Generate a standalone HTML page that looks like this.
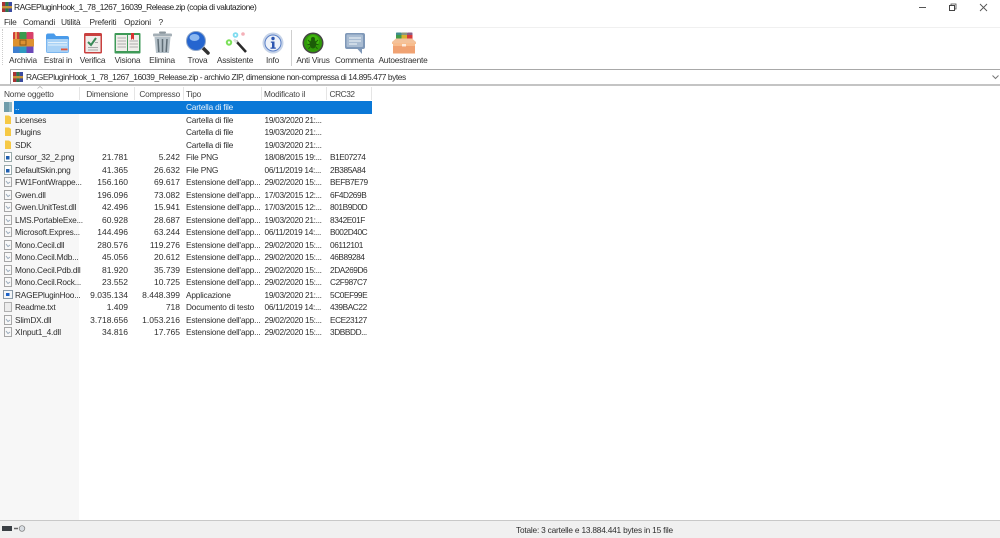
<!DOCTYPE html>
<html><head><meta charset="utf-8"><style>
html,body{margin:0;padding:0;background:#fff}
body{width:1000px;height:538px;overflow:hidden;position:relative;font-family:"Liberation Sans",sans-serif;font-size:8.3px;letter-spacing:-.2px;color:#2e2e2e;filter:blur(.25px)}
.a{position:absolute;white-space:nowrap}
.t{position:absolute;white-space:nowrap;line-height:12px;height:12px}
.m{top:15.5px;font-size:8.4px;letter-spacing:-.22px}
.lb{position:absolute;top:55px;line-height:11px;text-align:center;width:60px;font-size:8.3px;letter-spacing:-.2px;color:#333}
svg{position:absolute;overflow:visible}
.h{color:#444;top:88px}
.s{position:absolute;width:1px;top:87px;height:13px;background:#e5e5e5}
.w{position:absolute;left:0;width:372px;height:12px;line-height:12px}
.w i{position:absolute;font-style:normal;white-space:nowrap;top:0}
.n{left:15px}
.z{right:244px;font-size:8.5px;letter-spacing:0}
.c{right:192px;font-size:8.5px;letter-spacing:0}
.p{left:186px;letter-spacing:-.19px}
.d{left:264.5px;letter-spacing:-.3px}
.k{left:330px;letter-spacing:-.42px}
.w svg{left:4px;top:1px}
</style></head><body>
<svg width="0" height="0" style="position:absolute"><defs>
<symbol id="fo" viewBox="0 0 8 10"><path d="M1 .5H5L7 2V9H1Z" fill="#f6c945"/></symbol>
<symbol id="pn" viewBox="0 0 8 10"><rect x=".5" y=".5" width="7" height="9" fill="#fff" stroke="#9aa"/><rect x="2" y="4" width="3.500" height="3.500" fill="#1f5fb0"/></symbol>
<symbol id="dl" viewBox="0 0 8 10"><rect x=".5" y=".5" width="7" height="9" fill="#f8f8f8" stroke="#a6a6a6"/><path d="M2 4L4 6.500L6 5" fill="none" stroke="#9ab" stroke-width="1"/></symbol>
<symbol id="rr" viewBox="0 0 10 10"><rect width="10" height="10" fill="#7a4a8a"/><rect width="3" height="10" fill="#a33"/><rect x="3.500" width="3" height="10" fill="#2a7a4a"/><rect x="7" width="3" height="10" fill="#3a4aa0"/><rect y="4" width="10" height="2.400" fill="#c8943a"/></symbol>
</defs></svg>

<!-- title -->
<svg style="left:2px;top:2px" width="10" height="10"><use href="#rr"/></svg>
<div class="t" style="left:14px;top:1px;font-size:8.4px;letter-spacing:-.44px;color:#222">RAGEPluginHook_1_78_1267_16039_Release.zip (copia di valutazione)</div>
<svg style="left:919px;top:3px" width="70" height="10" viewBox="0 0 70 10"><path d="M0 4.500H7" stroke="#555" stroke-width="1"/><rect x="30.500" y="2.500" width="5" height="5" fill="none" stroke="#444" stroke-width="1"/><path d="M32 2.500V1H37V6H35.500" fill="none" stroke="#444" stroke-width=".8"/><path d="M61 1L68 8M68 1L61 8" stroke="#555" stroke-width=".9"/></svg>

<!-- menu -->
<div class="t m" style="left:4px">File</div>
<div class="t m" style="left:23px">Comandi</div>
<div class="t m" style="left:61px">Utilità</div>
<div class="t m" style="left:89.500px">Preferiti</div>
<div class="t m" style="left:124px">Opzioni</div>
<div class="t m" style="left:158.500px">?</div>
<div class="a" style="left:0;top:27px;width:1000px;height:1px;background:#f0f0f0"></div>
<div class="a" style="left:2px;top:29px;height:36px;border-left:1px dotted #ccc"></div>

<!-- toolbar icons -->
<svg style="left:12px;top:31px" width="23" height="23" viewBox="0 0 23 23"><rect x="1" y="1" width="6.500" height="21" rx="1" fill="#cf3f3a"/><rect x="7.500" y="1" width="7" height="21" fill="#3a9a4e"/><rect x="14.500" y="1" width="7" height="21" rx="1" fill="#d8406a"/><rect x="1" y="15" width="6.500" height="7" fill="#3f7fd0"/><rect x="14.500" y="15" width="7" height="7" fill="#6a48b8"/><rect x="7.500" y="15" width="7" height="7" fill="#2e9ac0"/><rect x="1" y="8" width="21" height="7.500" fill="#dd9130"/><rect x="8" y="9" width="6" height="5" fill="none" stroke="#8a5a18" stroke-width="1"/><rect x="3" y="1" width="2" height="7" fill="#e8a060"/></svg>
<svg style="left:45px;top:32px" width="25" height="22" viewBox="0 0 25 22"><path d="M1 4Q1 1.500 3 1.500H9L11 4H22Q24 4 24 6V19Q24 21 22 21H3Q1 21 1 19Z" fill="#4a9bea"/><rect x="1.500" y="7" width="22" height="13.500" rx="1" fill="#a9d2f6"/><path d="M3 10.500H22M3 13H22" stroke="#e3f1fc" stroke-width="1"/><rect x="16" y="16.500" width="6.500" height="1.800" fill="#e2553a"/></svg>
<svg style="left:83px;top:32px" width="20" height="22" viewBox="0 0 20 22"><rect x="1" y="1" width="18" height="20.500" rx="1.500" fill="#c9403f"/><rect x="2.500" y="4" width="15" height="16" fill="#efecea"/><path d="M5 10L8 13L13 6" fill="none" stroke="#3a8a58" stroke-width="2"/><path d="M5 15.500H15M5 18H15M12 10.500H15" stroke="#aaa" stroke-width="1"/></svg>
<svg style="left:114px;top:32px" width="27" height="22" viewBox="0 0 27 22"><rect x=".5" y="1" width="26" height="20.500" rx="1" fill="#3f9a58"/><path d="M2 3H13V19H2ZM14 3H25V19H14Z" fill="#f0eeea"/><path d="M3.500 6H12M3.500 9H12M3.500 12H12M3.500 15H12M15.500 9H24M15.500 12H24M15.500 15H24" stroke="#aeaeae" stroke-width="1"/><path d="M17 1H20V8L18.500 6.500L17 8Z" fill="#d83030"/></svg>
<svg style="left:151px;top:31px" width="23" height="23" viewBox="0 0 23 23"><rect x="8" y=".5" width="7" height="2" rx="1" fill="#8c979e"/><rect x="2" y="2.500" width="19" height="3" rx="1" fill="#a4afb6"/><path d="M3.500 6H19.500L18 22H5Z" fill="#b5c1c9"/><path d="M7 8L7.800 21M11.500 8V21M16 8L15.200 21" stroke="#5f6d76" stroke-width="1.500"/></svg>
<svg style="left:186px;top:31px" width="24" height="24" viewBox="0 0 24 24"><path d="M15 15L22 22" stroke="#333" stroke-width="3.500" stroke-linecap="round"/><circle cx="10" cy="10" r="9.500" fill="#2565cf"/><circle cx="10" cy="10" r="9.500" fill="none" stroke="#8fa7c9" stroke-width="1"/><ellipse cx="8.500" cy="6.500" rx="5" ry="3.500" fill="#8cb8f0"/></svg>
<svg style="left:223px;top:31px" width="25" height="23" viewBox="0 0 25 23"><path d="M13 10L23 21" stroke="#2a2a2a" stroke-width="2.500"/><path d="M11 8.500L14 11.500" stroke="#ddd" stroke-width="2.500"/><circle cx="12.500" cy="4" r="2.800" fill="#7fdcf0"/><circle cx="20" cy="3" r="1.800" fill="#f4b0b8"/><circle cx="6" cy="11.500" r="3.200" fill="#7ce05a"/><circle cx="6" cy="11.500" r="1.200" fill="#fff"/><circle cx="12.500" cy="4" r="1" fill="#fff"/></svg>
<svg style="left:262px;top:32px" width="22" height="22" viewBox="0 0 22 22"><circle cx="11" cy="11" r="10.500" fill="#c6d3e8"/><circle cx="11" cy="11" r="8" fill="#eef2f9" stroke="#5a80c8" stroke-width="1"/><circle cx="11" cy="6.500" r="1.700" fill="#2c55b0"/><path d="M8.800 9.500H12.500V15.500H13.800V16.800H8.500V15.500H10V10.800H8.800Z" fill="#2c55b0"/></svg>
<div class="a" style="left:291px;top:30px;width:1px;height:36px;background:#cfcfcf"></div>
<svg style="left:302px;top:32px" width="22" height="22" viewBox="0 0 22 22"><circle cx="11" cy="11" r="10.500" fill="#444"/><circle cx="11" cy="11" r="9" fill="#2f9a08"/><circle cx="11" cy="9" r="6" fill="#46bb12" opacity=".8"/><ellipse cx="11" cy="12" rx="3.500" ry="4.500" fill="#1b5c08"/><circle cx="11" cy="7" r="2" fill="#1b5c08"/><path d="M6 8L8 10M16 8L14 10M5.500 12.500H8M16.500 12.500H14M6.500 17L8 15M15.500 17L14 15" stroke="#1b5c08" stroke-width="1"/></svg>
<svg style="left:344px;top:32px" width="22" height="23" viewBox="0 0 22 23"><path d="M3 1H19Q21 1 21 3V15Q21 17 19 17H18V22L13.500 17H3Q1 17 1 15V3Q1 1 3 1Z" fill="#7f98b8"/><path d="M3.500 2.500H17.500Q19 2.500 19 4V14Q19 15 17.500 15H3.500Q2.500 15 2.500 14V4Q2.500 2.500 3.500 2.500Z" fill="#a9bcd2"/><path d="M5 6H17M5 9H17M5 12H13" stroke="#e4ebf2" stroke-width="1.200"/></svg>
<svg style="left:391px;top:32px" width="26" height="22" viewBox="0 0 26 22"><rect x="5" y=".5" width="5.500" height="8" rx="1" fill="#3f9a48"/><rect x="10.500" y=".5" width="5.500" height="8" fill="#d8b030"/><rect x="16" y=".5" width="5.500" height="8" rx="1" fill="#d83a3a"/><rect x="5" y=".5" width="16.500" height="2.500" fill="#3f7fd0" opacity=".5"/><path d="M1 10L5 6.500H21L25 10V12H1Z" fill="#f4c29a"/><rect x="2" y="11" width="22" height="10.500" fill="#f0a272"/><rect x="2" y="11" width="22" height="3" fill="#f8bd8e"/><rect x="11" y="12" width="4" height="2.500" fill="#fff" opacity=".7"/></svg>

<div class="lb" style="left:-7px">Archivia</div>
<div class="lb" style="left:28px">Estrai in</div>
<div class="lb" style="left:62.500px">Verifica</div>
<div class="lb" style="left:97.500px">Visiona</div>
<div class="lb" style="left:132px">Elimina</div>
<div class="lb" style="left:167.500px">Trova</div>
<div class="lb" style="left:205px">Assistente</div>
<div class="lb" style="left:242.500px">Info</div>
<div class="lb" style="left:283px">Anti Virus</div>
<div class="lb" style="left:324.500px">Commenta</div>
<div class="lb" style="left:373px">Autoestraente</div>

<!-- address bar -->
<div class="a" style="left:10px;top:69px;width:989px;height:14px;border:1px solid #a8a8a8"></div>
<svg style="left:13px;top:71.500px" width="10" height="10"><use href="#rr"/></svg>
<div class="t" style="left:26px;top:71px;font-size:8.400px;letter-spacing:-.42px">RAGEPluginHook_1_78_1267_16039_Release.zip - archivio ZIP, dimensione non-compressa di 14.895.477 bytes</div>
<svg style="left:992px;top:75px" width="7" height="5" viewBox="0 0 7 5"><path d="M.5 .5L3.500 3.500L6.500 .5" fill="none" stroke="#777" stroke-width="1"/></svg>
<div class="a" style="left:0;top:84px;width:1000px;height:2px;background:#c4c4c4"></div>

<!-- list -->
<div class="a" style="left:0;top:100px;width:79px;height:420px;background:#f7f7f7"></div>
<svg style="left:37px;top:86px" width="6" height="3" viewBox="0 0 6 3"><path d="M.5 2.500L3 .5L5.500 2.500" fill="none" stroke="#aaa" stroke-width=".7"/></svg>
<div class="s" style="left:79px"></div><div class="s" style="left:134px"></div><div class="s" style="left:183px"></div><div class="s" style="left:261px"></div><div class="s" style="left:326px"></div><div class="s" style="left:371px"></div>
<div class="a" style="left:13.500px;top:101px;width:358px;height:12.500px;background:#0a78d7"></div>
<div class="t h" style="left:4px">Nome oggetto</div>
<div class="t h" style="right:872px">Dimensione</div>
<div class="t h" style="right:820px">Compresso</div>
<div class="t h" style="left:186px">Tipo</div>
<div class="t h" style="left:264px">Modificato il</div>
<div class="t h" style="left:329.500px;letter-spacing:-.42px">CRC32</div>

<svg style="left:4px;top:102px" width="8" height="10" viewBox="0 0 8 10"><rect width="8" height="10" fill="#6f9cab"/><rect x="5" width="3" height="10" fill="#8fb6c2"/></svg>
<div class="t" style="left:15px;top:101px;color:#fff">..</div>
<div class="t" style="left:186px;top:101px;color:#e8f3fc">Cartella di file</div>

<div class="w" style="top:113.500px"><svg width="8" height="10"><use href="#fo"/></svg><i class="n">Licenses</i><i class="p">Cartella di file</i><i class="d">19/03/2020 21:...</i></div>
<div class="w" style="top:126px"><svg width="8" height="10"><use href="#fo"/></svg><i class="n">Plugins</i><i class="p">Cartella di file</i><i class="d">19/03/2020 21:...</i></div>
<div class="w" style="top:138.500px"><svg width="8" height="10"><use href="#fo"/></svg><i class="n">SDK</i><i class="p">Cartella di file</i><i class="d">19/03/2020 21:...</i></div>
<div class="w" style="top:151px"><svg width="8" height="10"><use href="#pn"/></svg><i class="n">cursor_32_2.png</i><i class="z">21.781</i><i class="c">5.242</i><i class="p">File PNG</i><i class="d">18/08/2015 19:...</i><i class="k">B1E07274</i></div>
<div class="w" style="top:163.500px"><svg width="8" height="10"><use href="#pn"/></svg><i class="n">DefaultSkin.png</i><i class="z">41.365</i><i class="c">26.632</i><i class="p">File PNG</i><i class="d">06/11/2019 14:...</i><i class="k">2B385A84</i></div>
<div class="w" style="top:176px"><svg width="8" height="10"><use href="#dl"/></svg><i class="n">FW1FontWrappe...</i><i class="z">156.160</i><i class="c">69.617</i><i class="p">Estensione dell'app...</i><i class="d">29/02/2020 15:...</i><i class="k">BEFB7E79</i></div>
<div class="w" style="top:188.500px"><svg width="8" height="10"><use href="#dl"/></svg><i class="n">Gwen.dll</i><i class="z">196.096</i><i class="c">73.082</i><i class="p">Estensione dell'app...</i><i class="d">17/03/2015 12:...</i><i class="k">6F4D269B</i></div>
<div class="w" style="top:201px"><svg width="8" height="10"><use href="#dl"/></svg><i class="n">Gwen.UnitTest.dll</i><i class="z">42.496</i><i class="c">15.941</i><i class="p">Estensione dell'app...</i><i class="d">17/03/2015 12:...</i><i class="k">801B9D0D</i></div>
<div class="w" style="top:213.500px"><svg width="8" height="10"><use href="#dl"/></svg><i class="n">LMS.PortableExe...</i><i class="z">60.928</i><i class="c">28.687</i><i class="p">Estensione dell'app...</i><i class="d">19/03/2020 21:...</i><i class="k">8342E01F</i></div>
<div class="w" style="top:226px"><svg width="8" height="10"><use href="#dl"/></svg><i class="n">Microsoft.Expres...</i><i class="z">144.496</i><i class="c">63.244</i><i class="p">Estensione dell'app...</i><i class="d">06/11/2019 14:...</i><i class="k">B002D40C</i></div>
<div class="w" style="top:238.500px"><svg width="8" height="10"><use href="#dl"/></svg><i class="n">Mono.Cecil.dll</i><i class="z">280.576</i><i class="c">119.276</i><i class="p">Estensione dell'app...</i><i class="d">29/02/2020 15:...</i><i class="k">06112101</i></div>
<div class="w" style="top:251px"><svg width="8" height="10"><use href="#dl"/></svg><i class="n">Mono.Cecil.Mdb...</i><i class="z">45.056</i><i class="c">20.612</i><i class="p">Estensione dell'app...</i><i class="d">29/02/2020 15:...</i><i class="k">46B89284</i></div>
<div class="w" style="top:263.500px"><svg width="8" height="10"><use href="#dl"/></svg><i class="n">Mono.Cecil.Pdb.dll</i><i class="z">81.920</i><i class="c">35.739</i><i class="p">Estensione dell'app...</i><i class="d">29/02/2020 15:...</i><i class="k">2DA269D6</i></div>
<div class="w" style="top:276px"><svg width="8" height="10"><use href="#dl"/></svg><i class="n">Mono.Cecil.Rock...</i><i class="z">23.552</i><i class="c">10.725</i><i class="p">Estensione dell'app...</i><i class="d">29/02/2020 15:...</i><i class="k">C2F987C7</i></div>
<div class="w" style="top:288.500px"><svg style="left:3px;top:1.500px" width="10" height="9" viewBox="0 0 10 9"><rect x=".5" y=".5" width="9" height="8" fill="#f4f6f8" stroke="#8a9aa8"/><rect x="3" y="3" width="3.500" height="3" fill="#1c62c8"/></svg><i class="n">RAGEPluginHoo...</i><i class="z">9.035.134</i><i class="c">8.448.399</i><i class="p">Applicazione</i><i class="d">19/03/2020 21:...</i><i class="k">5C0EF99E</i></div>
<div class="w" style="top:301px"><svg width="8" height="10" viewBox="0 0 8 10"><rect x=".5" y=".5" width="7" height="9" fill="#ececec" stroke="#b0b0b0"/></svg><i class="n">Readme.txt</i><i class="z">1.409</i><i class="c">718</i><i class="p">Documento di testo</i><i class="d">06/11/2019 14:...</i><i class="k">439BAC22</i></div>
<div class="w" style="top:313.500px"><svg width="8" height="10"><use href="#dl"/></svg><i class="n">SlimDX.dll</i><i class="z">3.718.656</i><i class="c">1.053.216</i><i class="p">Estensione dell'app...</i><i class="d">29/02/2020 15:...</i><i class="k">ECE23127</i></div>
<div class="w" style="top:326px"><svg width="8" height="10"><use href="#dl"/></svg><i class="n">XInput1_4.dll</i><i class="z">34.816</i><i class="c">17.765</i><i class="p">Estensione dell'app...</i><i class="d">29/02/2020 15:...</i><i class="k">3DBBDD...</i></div>

<!-- status -->
<div class="a" style="left:0;top:520px;width:1000px;height:18px;background:#f0f0f0;border-top:1px solid #c8c8c8;box-sizing:border-box"></div>
<svg style="left:2px;top:525px" width="24" height="8" viewBox="0 0 24 8"><rect y="1" width="10" height="5" fill="#3a3f44"/><path d="M12 3.500H16" stroke="#666" stroke-width="1.500"/><circle cx="20" cy="3.500" r="2.800" fill="#d8dde2" stroke="#777" stroke-width=".7"/></svg>
<div class="t" style="left:516px;top:523.500px">Totale: 3 cartelle e 13.884.441 bytes in 15 file</div>
</body></html>
